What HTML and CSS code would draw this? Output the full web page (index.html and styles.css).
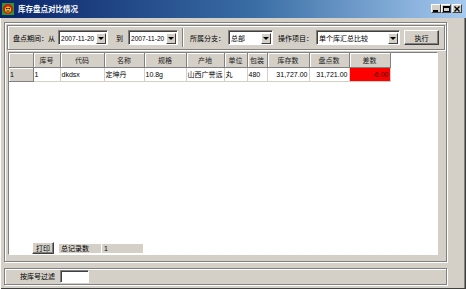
FILE: index.html
```html
<!DOCTYPE html>
<html lang="zh">
<head>
  <meta charset="UTF-8">
  <title>库存盘点对比情况</title>
  <link rel="stylesheet" href="styles.css">
</head>
<body>

  <div class="window">
    <div class="titlebar">
      <svg class="app-icon" width="12" height="12" viewBox="0 0 12 12">
        <rect x="0" y="0" width="12" height="12" fill="#2e9a2e"/>
        <circle cx="6" cy="6" r="5" fill="#d01818"/>
        <circle cx="6" cy="6.5" r="3" fill="#f0d020"/>
        <circle cx="4.8" cy="5.6" r="0.8" fill="#000"/>
        <circle cx="7.2" cy="5.6" r="0.8" fill="#000"/>
        <rect x="4.5" y="7.6" width="3" height="0.9" fill="#000"/>
      </svg>
      <span class="title">库存盘点对比情况</span>
      <div class="caption-buttons">
        <span class="cap-btn">
          <svg width="6" height="6" viewBox="0 0 6 6"><rect x="0" y="4" width="5" height="2" fill="#000"/></svg>
        </span>
        <span class="cap-btn">
          <svg width="7" height="6" viewBox="0 0 7 6"><rect x="0.5" y="0.5" width="6" height="5" fill="none" stroke="#000"/><rect x="0" y="0" width="7" height="2" fill="#000"/></svg>
        </span>
        <span class="cap-btn close">
          <svg width="6" height="6" viewBox="0 0 6 6"><path d="M0.5 0.5 L5.5 5.5 M5.5 0.5 L0.5 5.5" stroke="#000" stroke-width="1.4"/></svg>
        </span>
      </div>
    </div>

    <div class="client">
      <div class="main-panel">
        <div class="toolbar">
          <span class="lbl first">盘点期间：从</span>
          <div class="combo date">
            <span class="combo-text">2007-11-20</span>
            <span class="drop"></span>
          </div>
          <span class="lbl to">到</span>
          <div class="combo date">
            <span class="combo-text">2007-11-20</span>
            <span class="drop"></span>
          </div>
          <span class="sep"></span>
          <span class="lbl">所属分支：</span>
          <div class="combo branch">
            <span class="combo-text">总部</span>
            <span class="drop"></span>
          </div>
          <span class="lbl op">操作项目：</span>
          <div class="combo action">
            <span class="combo-text">单个库汇总比较</span>
            <span class="drop"></span>
          </div>
          <button class="btn run">执行</button>
        </div>

        <div class="grid-wrap">
          <table class="grid">
            <colgroup>
              <col style="width:24px"><col style="width:27px"><col style="width:44px">
              <col style="width:40px"><col style="width:42px"><col style="width:38px">
              <col style="width:23px"><col style="width:20px"><col style="width:42px">
              <col style="width:40px"><col style="width:41px">
            </colgroup>
            <thead>
              <tr>
                <th></th><th>库号</th><th>代码</th><th>名称</th><th>规格</th><th>产地</th>
                <th>单位</th><th>包装</th><th>库存数</th><th>盘点数</th><th>差数</th>
              </tr>
            </thead>
            <tbody id="grid-body"></tbody>
          </table>

          <div class="grid-footer">
            <button class="btn print">打印</button>
            <span class="stat-label">总记录数</span>
            <span class="stat-value">1</span>
          </div>
        </div>
      </div>

      <div class="filter-panel">
        <span class="filter-label">按库号过滤</span>
        <input class="filter-input" type="text">
      </div>
    </div>
  </div>

  <script>
    const rows = [
      { no: '1', code: 'dkdsx', name: '定坤丹', spec: '10.8g', origin: '山西广誉远', unit: '丸',
        pack: '480', stock: '31,727.00', counted: '31,721.00', diff: '-6.00' }
    ];
    const tbody = document.getElementById('grid-body');

    rows.forEach((r, index) => {
      const tr = document.createElement('tr');
      tr.innerHTML = `
        <td class="row-head">${index + 1}</td>
        <td>${r.no}</td>
        <td>${r.code}</td>
        <td>${r.name}</td>
        <td>${r.spec}</td>
        <td>${r.origin}</td>
        <td>${r.unit}</td>
        <td>${r.pack}</td>
        <td class="num">${r.stock}</td>
        <td class="num">${r.counted}</td>
        <td class="num ${r.diff !== '0.00' ? 'bad' : ''}">${r.diff}</td>
      `;
      tbody.appendChild(tr);
    });
  </script>
</body>
</html>
```

FILE: styles.css
```css
* {
  box-sizing: border-box;
}
body {
  margin: 0;
  background-color: #D4D0C8;
  color: #000;
  font-family: "Liberation Sans", "Noto Sans CJK SC", sans-serif;
  font-size: 7px;
}
.window {
  width: 466px;
  height: 289px;
  display: flex;
  flex-direction: column;
}

/* title bar */
.titlebar {
  height: 18px;
  display: flex;
  align-items: center;
  padding: 0 4px 1px 2px;
  background: linear-gradient(to right, #0A246A, #3A6EA5 55%, #A6CAF0);
}
.app-icon {
  margin-right: 4px;
}
.title {
  color: white;
  font-weight: bold;
  font-size: 7.5px;
  font-family: "Noto Sans CJK SC", sans-serif;
}
.caption-buttons {
  margin-left: auto;
  display: flex;
}
.cap-btn {
  width: 10px;
  height: 9px;
  display: flex;
  align-items: center;
  justify-content: center;
  background-color: #D4D0C8;
  border: 1px solid;
  border-color: #fff #404040 #404040 #fff;
}
.cap-btn.close {
  margin-left: 1px;
}

/* client area */
.client {
  flex: 1;
  display: flex;
  flex-direction: column;
  gap: 6px;
  padding: 4px 19px 4px 4px;
  box-shadow: inset 1px 0 #fff, inset -1px 0 #404040, inset 0 -1px #404040, inset -2px 0 #808080;
}
.main-panel {
  height: 240px;
  display: flex;
  flex-direction: column;
  padding: 2px 1px 6px 2px;
  border: 1px solid #808080;
  box-shadow: inset 1px 1px #fff, 1px 1px #fff;
}
.toolbar {
  height: 25px;
  display: flex;
  align-items: center;
  padding-left: 5px;
  border: 1px solid #808080;
  box-shadow: inset 1px 1px #fff, 1px 1px #fff;
  font-family: "Noto Sans CJK SC", sans-serif;
}
.lbl {
  white-space: nowrap;
  margin-right: 3px;
}
.lbl.to {
  margin: 0 5px 0 8px;
}
.lbl.op {
  margin-left: 5px;
}
.sep {
  width: 2px;
  height: 19px;
  margin: 0 6px 0 4px;
  border-left: 1px solid #808080;
  border-right: 1px solid #fff;
}
.combo {
  height: 15px;
  display: flex;
  align-items: center;
  background-color: white;
  border: 1px solid;
  border-color: #808080 #fff #fff #808080;
  box-shadow: inset 1px 1px #404040;
  padding: 2px 1px 1px 2px;
}
.combo.date {
  width: 50px;
}
.combo.branch {
  width: 45px;
}
.combo.action {
  width: 84px;
}
.combo-text {
  flex: 1;
  white-space: nowrap;
  overflow: hidden;
  font-family: "Liberation Sans", "Noto Sans CJK SC", sans-serif;
}
.combo.date .combo-text {
  font-size: 6.6px;
}
.drop {
  flex: none;
  width: 10px;
  height: 11px;
  position: relative;
  background-color: #D4D0C8;
  border: 1px solid;
  border-color: #fff #404040 #404040 #fff;
}
.drop::after {
  content: "";
  position: absolute;
  left: 1px;
  top: 3px;
  border-left: 3px solid transparent;
  border-right: 3px solid transparent;
  border-top: 3px solid #000;
}
.btn {
  padding: 0;
  background-color: #D4D0C8;
  border: 1px solid;
  border-color: #fff #404040 #404040 #fff;
  box-shadow: inset -1px -1px #808080;
  font-family: "Noto Sans CJK SC", sans-serif;
  font-size: 7px;
  color: #000;
}
.btn.run {
  width: 35px;
  height: 15px;
  margin-left: 4px;
}

/* grid */
.grid-wrap {
  flex: 1;
  display: flex;
  flex-direction: column;
  width: 430px;
  margin: 2px 0 0 1px;
  background-color: white;
  border: 1px solid;
  border-color: #808080 #fff #fff #808080;
}
.grid {
  width: 381px;
  table-layout: fixed;
  border-collapse: collapse;
  font-family: "Liberation Sans", "Noto Sans CJK SC", sans-serif;
}
.grid th {
  height: 14px;
  padding: 0;
  font-weight: normal;
  color: #222;
  font-family: "Noto Sans CJK SC", sans-serif;
  text-align: center;
  background-color: #D4D0C8;
  border-right: 1px solid #808080;
  border-bottom: 1px solid #808080;
  box-shadow: inset 1px 1px #fff;
}
.grid td {
  height: 14px;
  padding: 0 1px;
  white-space: nowrap;
  overflow: hidden;
  border-right: 1px solid #D4D0C8;
  border-bottom: 1px solid #D4D0C8;
}
.grid td.row-head {
  background-color: #D4D0C8;
  border-right: 1px solid #808080;
  border-bottom: 1px solid #808080;
  box-shadow: inset 1px 1px #fff;
}
.grid td.num {
  text-align: right;
}
.grid td.bad {
  background-color: #FF0000;
  color: #400000;
}
.grid-footer {
  margin-top: auto;
  display: flex;
  align-items: center;
  height: 12px;
  padding-left: 23px;
  font-family: "Noto Sans CJK SC", sans-serif;
}
.btn.print {
  width: 22px;
  height: 12px;
  margin-right: 5px;
}
.stat-label,
.stat-value {
  height: 9px;
  line-height: 9px;
  padding-left: 2px;
  background-color: #D4D0C8;
}
.stat-label {
  width: 42px;
  margin-right: 1px;
}
.stat-value {
  width: 41px;
  font-family: "Liberation Sans", sans-serif;
}

/* filter row */
.filter-panel {
  height: 17px;
  display: flex;
  align-items: center;
  padding-left: 2px;
  border: 1px solid #808080;
  box-shadow: inset 1px 1px #fff, 1px 1px #fff;
}
.filter-label {
  width: 51px;
  height: 13px;
  line-height: 13px;
  padding-right: 3px;
  text-align: right;
  font-family: "Noto Sans CJK SC", sans-serif;
}
.filter-input {
  width: 29px;
  height: 13px;
  margin-left: 2px;
  background-color: white;
  border: 1px solid;
  border-color: #808080 #fff #fff #808080;
  box-shadow: inset 1px 1px #404040;
}
```
